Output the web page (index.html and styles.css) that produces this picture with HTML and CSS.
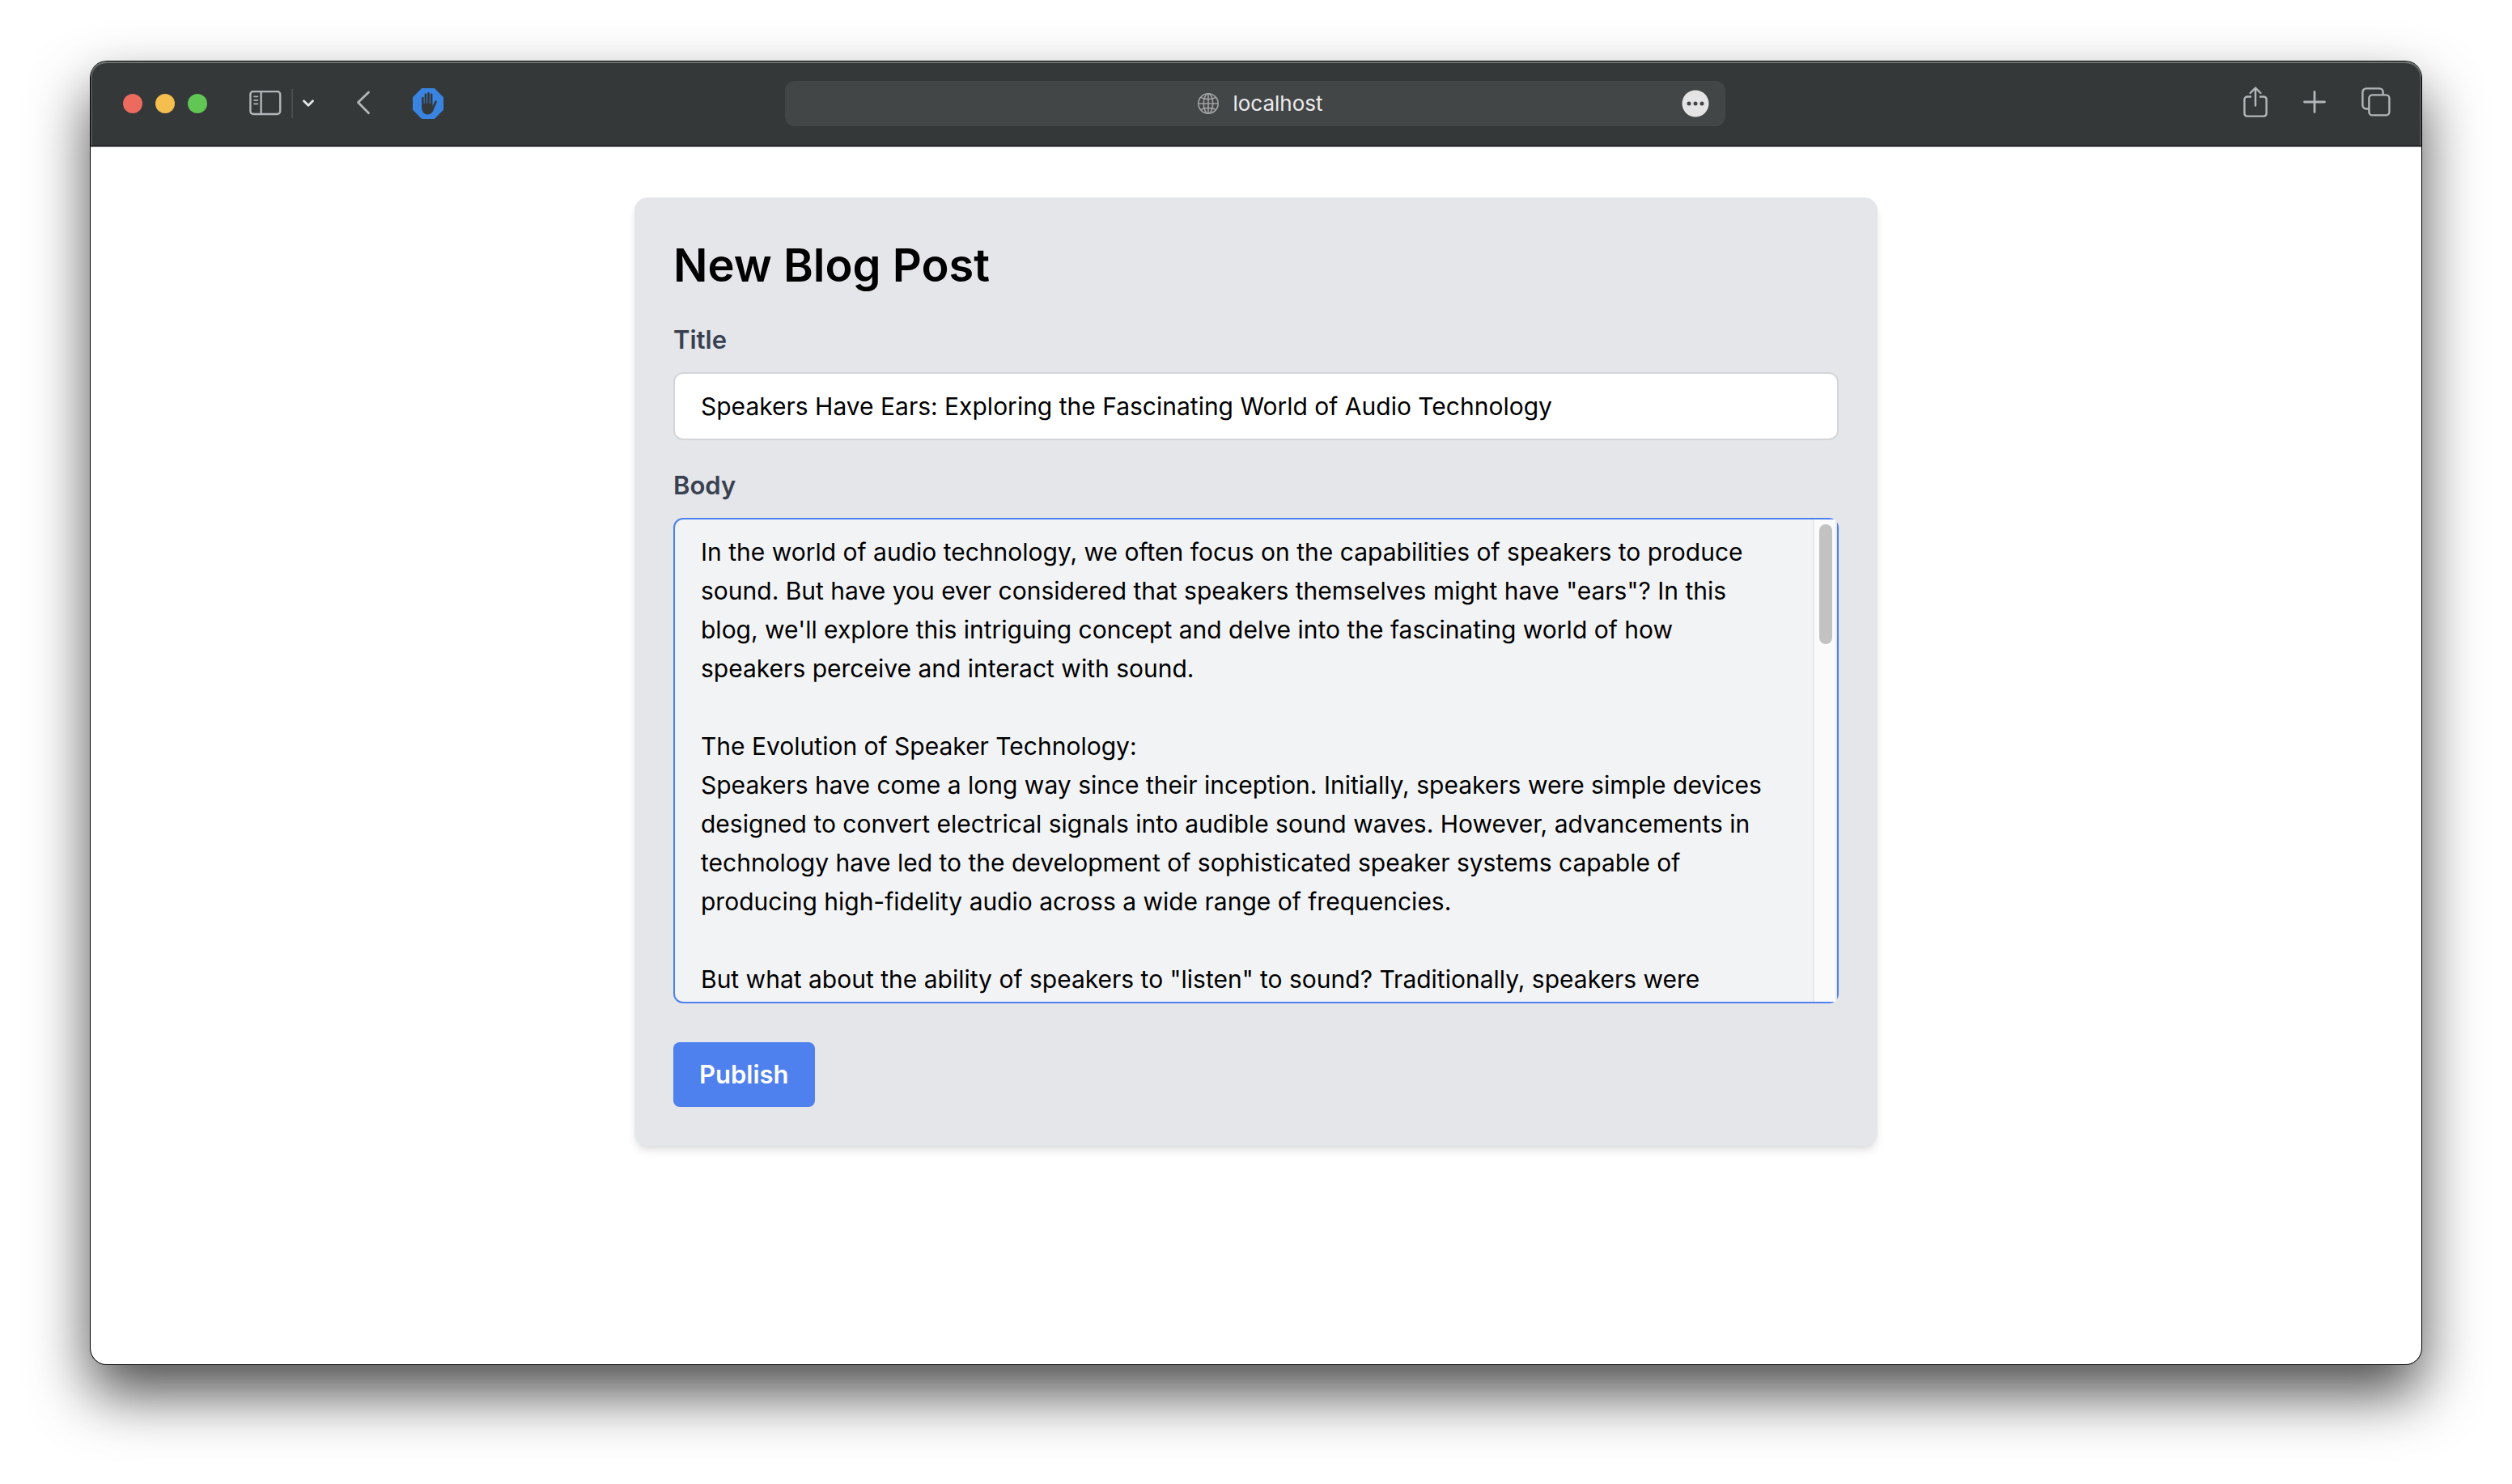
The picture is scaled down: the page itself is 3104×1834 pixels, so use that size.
FILE: index.html
```html
<!DOCTYPE html>
<html lang="en">
<head>
<meta charset="utf-8">
<title>New Blog Post</title>
<link rel="stylesheet" href="styles.css">
</head>
<body>
<div class="window">
  <header class="toolbar">
    <div class="toolbar-left">
      <div class="lights">
        <button class="light light-close" aria-label="Close"></button>
        <button class="light light-minimize" aria-label="Minimize"></button>
        <button class="light light-zoom" aria-label="Zoom"></button>
      </div>
      <div class="sidebar-group">
        <button class="tool" aria-label="Sidebar">
          <svg width="40" height="32" viewBox="0 0 40 32" fill="none" stroke="currentColor" stroke-width="2.4" stroke-linecap="round">
            <rect x="1.4" y="1" width="36.8" height="28" rx="3.6"/>
            <path d="M14.6 1v28"/>
            <path d="M6 7.3h4.400M6 11.800h4.400M6 16.300h4.400" stroke-width="1.8"/>
          </svg>
        </button>
        <span class="divider"></span>
        <button class="tool tool-bright" aria-label="Tab groups">
          <svg width="14" height="10" viewBox="0 0 14 10" fill="none" stroke="currentColor" stroke-width="2.8" stroke-linecap="round" stroke-linejoin="round"><path d="M1.5 1.7 7 7.3l5.500-5.600"/></svg>
        </button>
      </div>
      <button class="tool" aria-label="Back">
        <svg width="18" height="32" viewBox="0 0 18 32" fill="none" stroke="currentColor" stroke-width="2.8" stroke-linecap="round" stroke-linejoin="round"><path d="M15.500 2 2.500 14.500l13 13.300"/></svg>
      </button>
      <button class="tool tool-blocker" aria-label="Content blocker">
        <svg width="38" height="38" viewBox="0 0 38 38">
          <path fill="#3984e0" d="M11.200 0h15.600L38 11.200v15.600L26.800 38H11.200L0 26.800V11.200z"/>
          <g stroke="#353839" stroke-linecap="round" fill="none">
            <path stroke-width="2.600" d="M12.400 12v10M15.900 7.800v13M19.500 6.300v14M23.100 7.800v13"/>
            <path stroke-width="2.800" d="M28.500 16.800 25.300 24"/>
          </g>
          <path fill="#353839" d="M11.100 19h13.300v3.600l3.200-3.400c-1 5.600-2.400 13.200-9 13.200-5.500 0-7.500-4.400-7.500-9z"/>
        </svg>
      </button>
    </div>
    <div class="address">
      <svg class="globe" width="28" height="28" viewBox="0 0 28 28" fill="none" stroke="currentColor" stroke-width="1.600">
        <circle cx="14" cy="14" r="12.200"/><ellipse cx="14" cy="14" rx="5.700" ry="12.200"/>
        <path d="M14 1.800v24.400M1.800 14h24.400M4.600 6.400c5 3 13.800 3 18.800 0M4.600 21.600c5-3 13.800-3 18.800 0"/>
      </svg>
      <span class="host">localhost</span>
      <button class="more" aria-label="Page menu">
        <svg width="34" height="34" viewBox="0 0 34 34"><circle cx="17" cy="17" r="16.500" fill="#e4e4e4"/><g fill="#434647"><circle cx="9" cy="17" r="2.500"/><circle cx="17" cy="17" r="2.500"/><circle cx="25" cy="17" r="2.500"/></g></svg>
      </button>
    </div>
    <div class="toolbar-right">
      <button class="tool" aria-label="Share">
        <svg width="30" height="38" viewBox="0 0 30 38" fill="none" stroke="currentColor" stroke-width="2.400" stroke-linecap="round" stroke-linejoin="round"><path d="M10 12.500H5c-2.200 0-3.600 1.400-3.600 3.600V33c0 2.200 1.400 3.600 3.600 3.600h20c2.200 0 3.600-1.400 3.600-3.600V16.100c0-2.200-1.400-3.600-3.600-3.600h-5" stroke-linecap="butt"/><path d="M15 23.500V2M8.600 8 15 1.600 21.400 8"/></svg>
      </button>
      <button class="tool" aria-label="New tab">
        <svg width="28" height="28" viewBox="0 0 28 28" fill="none" stroke="currentColor" stroke-width="2.800" stroke-linecap="round"><path d="M14 1.500v25M1.500 14h25"/></svg>
      </button>
      <button class="tool" aria-label="Show all tabs">
        <svg width="36" height="36" viewBox="0 0 36 36" fill="none" stroke="currentColor" stroke-width="2.400"><rect x="9.400" y="9.400" width="25" height="25" rx="4"/><path d="M9.400 26.500H6c-2.700 0-4.600-1.900-4.600-4.600V6c0-2.700 1.900-4.600 4.600-4.600h16c2.700 0 4.600 1.900 4.600 4.600v3.400"/></svg>
      </button>
    </div>
  </header>
  <main class="page">
    <form class="card">
      <h1 class="heading">New Blog Post</h1>
      <div class="field">
        <label class="label" for="title">Title</label>
        <input class="input" id="title" type="text" value="Speakers Have Ears: Exploring the Fascinating World of Audio Technology">
      </div>
      <div class="field">
        <label class="label" for="body">Body</label>
        <div class="editor">
          <textarea class="textarea" id="body">In the world of audio technology, we often focus on the capabilities of speakers to produce sound. But have you ever considered that speakers themselves might have "ears"? In this blog, we'll explore this intriguing concept and delve into the fascinating world of how speakers perceive and interact with sound.

The Evolution of Speaker Technology:
Speakers have come a long way since their inception. Initially, speakers were simple devices designed to convert electrical signals into audible sound waves. However, advancements in technology have led to the development of sophisticated speaker systems capable of producing high-fidelity audio across a wide range of frequencies.

But what about the ability of speakers to "listen" to sound? Traditionally, speakers were</textarea>
          <div class="scrollbar"><div class="thumb"></div></div>
        </div>
      </div>
      <button class="publish" type="button">Publish</button>
    </form>
  </main>
</div>
</body>
</html>
```
FILE: styles.css
```css
* {
  box-sizing: border-box;
}

body {
  margin: 0;
  min-height: 100vh;
  display: flex;
  padding: 76px 112px 148px;
  background: #fff;
  color: #000;
  font-family: Inter, "Liberation Sans", sans-serif;
}

button {
  padding: 0;
  border: 0;
  background: none;
  font: inherit;
}

svg {
  display: block;
}

.window {
  flex: 1;
  display: flex;
  flex-direction: column;
  border-radius: 20px;
  background: #fff;
  box-shadow: 0 0 0 1px #000, 0 36px 72px rgba(0, 0, 0, 0.7);
}

.toolbar {
  display: grid;
  grid-template-columns: 1fr minmax(0, 1162px) 1fr;
  align-items: center;
  height: 105px;
  padding: 0 38px 0 36px;
  border-bottom: 1px solid #000;
  border-radius: 20px 20px 0 0;
  background: #353839;
  box-shadow: inset 0 2px #6f7271, inset 2px 0 #505354, inset -2px 0 #505354;
}

.toolbar-left,
.toolbar-right,
.lights,
.sidebar-group {
  display: flex;
  align-items: center;
}

.toolbar-left {
  padding-left: 4px;
}

.lights {
  gap: 16px;
}

.light {
  width: 24px;
  height: 24px;
  border-radius: 50%;
}

.light-close {
  background: #ed6a5f;
}

.light-minimize {
  background: #f5bf50;
}

.light-zoom {
  background: #62c655;
}

.sidebar-group {
  gap: 12px;
  margin: 0 52px;
}

.divider {
  width: 2px;
  height: 36px;
  background: #4b4d4e;
}

.tool {
  color: #b3b6b8;
}

.tool-bright {
  color: #e4e6e8;
}

.tool-blocker {
  margin-left: 52px;
}

.address {
  display: grid;
  grid-template-columns: 1fr auto auto 1fr;
  align-items: center;
  height: 56px;
  padding: 0 20px 0 32px;
  border-radius: 12px;
  background: #434647;
}

.globe {
  grid-column: 2;
  margin-right: 16px;
  color: #a0a2a2;
}

.host {
  color: #ececec;
  font-size: 26px;
  line-height: 32px;
}

.more {
  justify-self: end;
}

.toolbar-right {
  justify-content: flex-end;
  gap: 44px;
  padding-bottom: 4px;
}

.page {
  flex: 1;
  padding: 62px 48px;
  border-top: 1px solid #b5b5b5;
}

.card {
  max-width: 1536px;
  margin: 0 auto;
  padding: 48px;
  border-radius: 16px;
  background: #e5e6ea;
  box-shadow: 0 8px 12px -2px rgba(0, 0, 0, 0.1), 0 4px 8px -4px rgba(0, 0, 0, 0.1);
}

.heading {
  margin: 0 0 32px;
  font-size: 56px;
  line-height: 72px;
  font-weight: 600;
}

.field {
  margin-bottom: 32px;
}

.label {
  display: block;
  margin-bottom: 16px;
  color: #394151;
  font-size: 31px;
  line-height: 48px;
  font-weight: 600;
}

.input,
.editor {
  display: flex;
  width: 100%;
  border: 2px solid #d2d5da;
  border-radius: 12px;
  background: #fff;
}

.input,
.textarea {
  padding: 16px 48px 16px 32px;
  color: #000;
  font-family: inherit;
  font-size: 30px;
  line-height: 48px;
}

.input {
  height: 84px;
}

.editor {
  height: 600px;
  margin-bottom: 48px;
  border-color: #4f81ee;
  background: #f2f3f5;
}

.textarea {
  flex: 1;
  min-width: 0;
  border: 0;
  outline: 0;
  resize: none;
  overflow: hidden;
  background: none;
}

.scrollbar {
  width: 30px;
  padding: 6px 4px 6px 6px;
  border: solid #e8e8e8;
  border-width: 0 2px;
  background: #fafafa;
}

.thumb {
  width: 16px;
  height: 148px;
  border-radius: 8px;
  background: #c2c2c2;
}

.publish {
  height: 80px;
  padding: 0 32px;
  border-radius: 8px;
  background: #4f81ee;
  color: #fff;
  font-size: 31px;
  line-height: 48px;
  font-weight: 600;
}
```
